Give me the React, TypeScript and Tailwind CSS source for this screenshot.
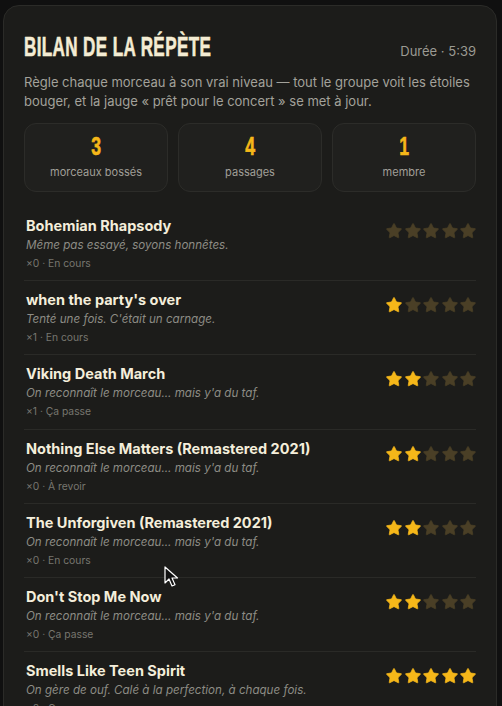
import React from "react";

const songs = [
  { title: "Bohemian Rhapsody", comment: "Même pas essayé, soyons honnêtes.", meta: "×0 · En cours", stars: 0 },
  { title: "when the party's over", comment: "Tenté une fois. C'était un carnage.", meta: "×1 · En cours", stars: 1 },
  { title: "Viking Death March", comment: "On reconnaît le morceau... mais y'a du taf.", meta: "×1 · Ça passe", stars: 2 },
  { title: "Nothing Else Matters (Remastered 2021)", comment: "On reconnaît le morceau... mais y'a du taf.", meta: "×0 · À revoir", stars: 2 },
  { title: "The Unforgiven (Remastered 2021)", comment: "On reconnaît le morceau... mais y'a du taf.", meta: "×0 · En cours", stars: 2 },
  { title: "Don't Stop Me Now", comment: "On reconnaît le morceau... mais y'a du taf.", meta: "×0 · Ça passe", stars: 2 },
  { title: "Smells Like Teen Spirit", comment: "On gère de ouf. Calé à la perfection, à chaque fois.", meta: "×0 · Ça passe", stars: 5 },
];

const STAR =
  "M11.525 2.295a.53.53 0 0 1 .95 0l2.31 4.679a2.123 2.123 0 0 0 1.595 1.16l5.166.756a.53.53 0 0 1 .294.904l-3.736 3.638a2.123 2.123 0 0 0-.611 1.878l.882 5.14a.53.53 0 0 1-.771.56l-4.618-2.428a2.122 2.122 0 0 0-1.973 0L6.396 21.01a.53.53 0 0 1-.77-.56l.881-5.139a2.122 2.122 0 0 0-.611-1.879L2.16 9.795a.53.53 0 0 1 .294-.906l5.165-.755a2.122 2.122 0 0 0 1.597-1.16z";

function Stars({ n }: { n: number }) {
  return (
    <div className="-mr-[1px] mt-[6px] flex shrink-0 gap-[0.5px]">
      {[0, 1, 2, 3, 4].map((i) => (
        <svg
          key={i}
          viewBox="0 0 24 24"
          className={i < n ? "h-[18px] w-[18px] text-[#f5b719]" : "h-[18px] w-[18px] text-[#4a3f26]"}
        >
          <path d={STAR} fill="currentColor" stroke="currentColor" strokeWidth="1" strokeLinejoin="round" />
        </svg>
      ))}
    </div>
  );
}

export default function App() {
  return (
    <div className="relative min-h-screen bg-[#101010] pl-[3px] pt-[5px] font-['Inter',sans-serif]">
      <div className="w-[494px] rounded-2xl border border-[#2b2b28] bg-[#1c1c1a] px-5 pb-6 pt-[25px]">
        <div className="flex items-baseline justify-between">
          <h1 className="origin-left scale-x-[0.61] whitespace-nowrap font-['Liberation_Sans',sans-serif] text-[28px] font-bold leading-[32px] tracking-[0.6px] text-[#f4ecd3] [-webkit-text-stroke:0.6px_#f4ecd3]">
            BILAN DE LA RÉPÈTE
          </h1>
          <span className="text-[13px] text-[#9b9a93]">Durée · 5:39</span>
        </div>
        <p className="mt-[10px] text-[13px] leading-[19px] text-[#a3a29b]">
          Règle chaque morceau à son vrai niveau — tout le groupe voit les étoiles bouger, et la jauge « prêt pour le concert » se met à jour.
        </p>
        <div className="mt-3 grid grid-cols-3 gap-[10px]">
          {[
            ["3", "morceaux bossés"],
            ["4", "passages"],
            ["1", "membre"],
          ].map(([n, l]) => (
            <div
              key={l}
              className="flex h-[69px] flex-col items-center rounded-xl border border-[#2c2c29] bg-[#20201e] pt-[9px]"
            >
              <div className="scale-x-[0.68] font-['Liberation_Sans',sans-serif] text-[26px] font-bold leading-[26px] text-[#f5b719] [-webkit-text-stroke:0.6px_#f5b719]">
                {n}
              </div>
              <div className="mt-[5px] text-[11px] leading-4 text-[#a09f98]">{l}</div>
            </div>
          ))}
        </div>
        <div className="mt-[15px] divide-y divide-[#2a2a27]">
          {songs.map((s) => (
            <div key={s.title} className="flex items-start justify-between py-[9.1px]">
              <div className="min-w-0 pl-[2px]">
                <div className="text-[14.5px] font-bold leading-5 text-[#f4eedb]">{s.title}</div>
                <div className="text-[11.6px] italic leading-[18px] text-[#8d8c85]">{s.comment}</div>
                <div className="mt-[1px] text-[10.3px] leading-4 text-[#77766f]">{s.meta}</div>
              </div>
              <Stars n={s.stars} />
            </div>
          ))}
        </div>
      </div>
      <svg className="absolute left-[164px] top-[566px] h-[22px] w-[16px]" viewBox="0 0 16 22">
        <path d="M1 1 L1 17 L5 13 L8 20 L11 18.7 L8 12 L13.5 12 Z" fill="#111" stroke="#fff" strokeWidth="1.2" strokeLinejoin="round" />
      </svg>
    </div>
  );
}
